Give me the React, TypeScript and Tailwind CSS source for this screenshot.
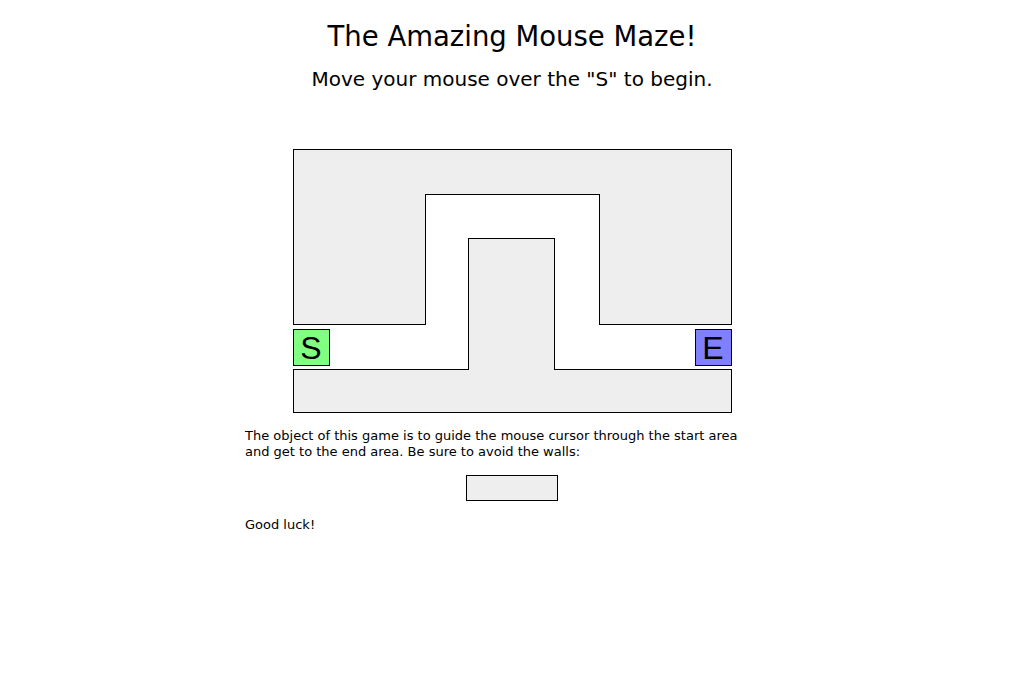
export default function App() {
  return (
    <div className="min-h-screen bg-white text-black font-['DejaVu_Sans',sans-serif]">
      <div className="flex flex-col items-center pt-[20px]">
        <header className="flex flex-col items-center gap-[15px]">
          <h1 className="text-[27.5px] leading-[32px] font-normal">The Amazing Mouse Maze!</h1>
          <h2 className="text-[20px] leading-[24px] font-normal">Move your mouse over the "S" to begin.</h2>
        </header>

        {/* maze board: 5x5 grid, walls span cells */}
        <div className="mt-[58px] grid grid-cols-[133px_42px_87px_44px_133px] grid-rows-[46px_43px_87px_44px_44px] w-[439px] h-[264px]">
          <div className="col-start-1 row-start-1 bg-[#eeeeee] border-t border-l border-black" />
          <div className="col-start-2 col-span-3 row-start-1 bg-[#eeeeee] border-t border-b border-black" />
          <div className="col-start-5 row-start-1 bg-[#eeeeee] border-t border-r border-black" />
          <div className="col-start-1 row-start-2 row-span-2 -mt-px bg-[#eeeeee] border-l border-r border-b border-black" />
          <div className="col-start-5 row-start-2 row-span-2 -mt-px bg-[#eeeeee] border-l border-r border-b border-black" />

          <div className="col-start-1 row-start-4 self-start justify-self-start mt-[4px] w-[37px] h-[37px] bg-[#80ff80] border border-black flex items-center justify-center font-['Liberation_Sans',Arial,sans-serif] text-[32px] leading-none">
            S
          </div>
          <div className="col-start-5 row-start-4 self-start justify-self-end mt-[4px] w-[37px] h-[37px] bg-[#8080ff] border border-black flex items-center justify-center font-['Liberation_Sans',Arial,sans-serif] text-[32px] leading-none">
            E
          </div>

          <div className="col-start-1 col-span-2 row-start-5 bg-[#eeeeee] border-t border-l border-b border-black" />
          <div className="col-start-3 row-start-5 bg-[#eeeeee] border-b border-black" />
          <div className="col-start-4 col-span-2 row-start-5 bg-[#eeeeee] border-t border-r border-b border-black" />
          <div className="col-start-3 row-start-3 row-span-2 -mb-px bg-[#eeeeee] border-t border-l border-r border-black" />
        </div>

        <section className="w-[534px] mt-[15px] flex flex-col text-[13px] leading-[16px]">
          <p className="pr-[30px]">
            The object of this game is to guide the mouse cursor through the start area and get to the end area. Be
            sure to avoid the walls:
          </p>
          <div className="self-center mt-[15px] w-[92px] h-[26px] bg-[#eeeeee] border border-black" />
          <p className="mt-[16px]">Good luck!</p>
        </section>
      </div>
    </div>
  );
}
